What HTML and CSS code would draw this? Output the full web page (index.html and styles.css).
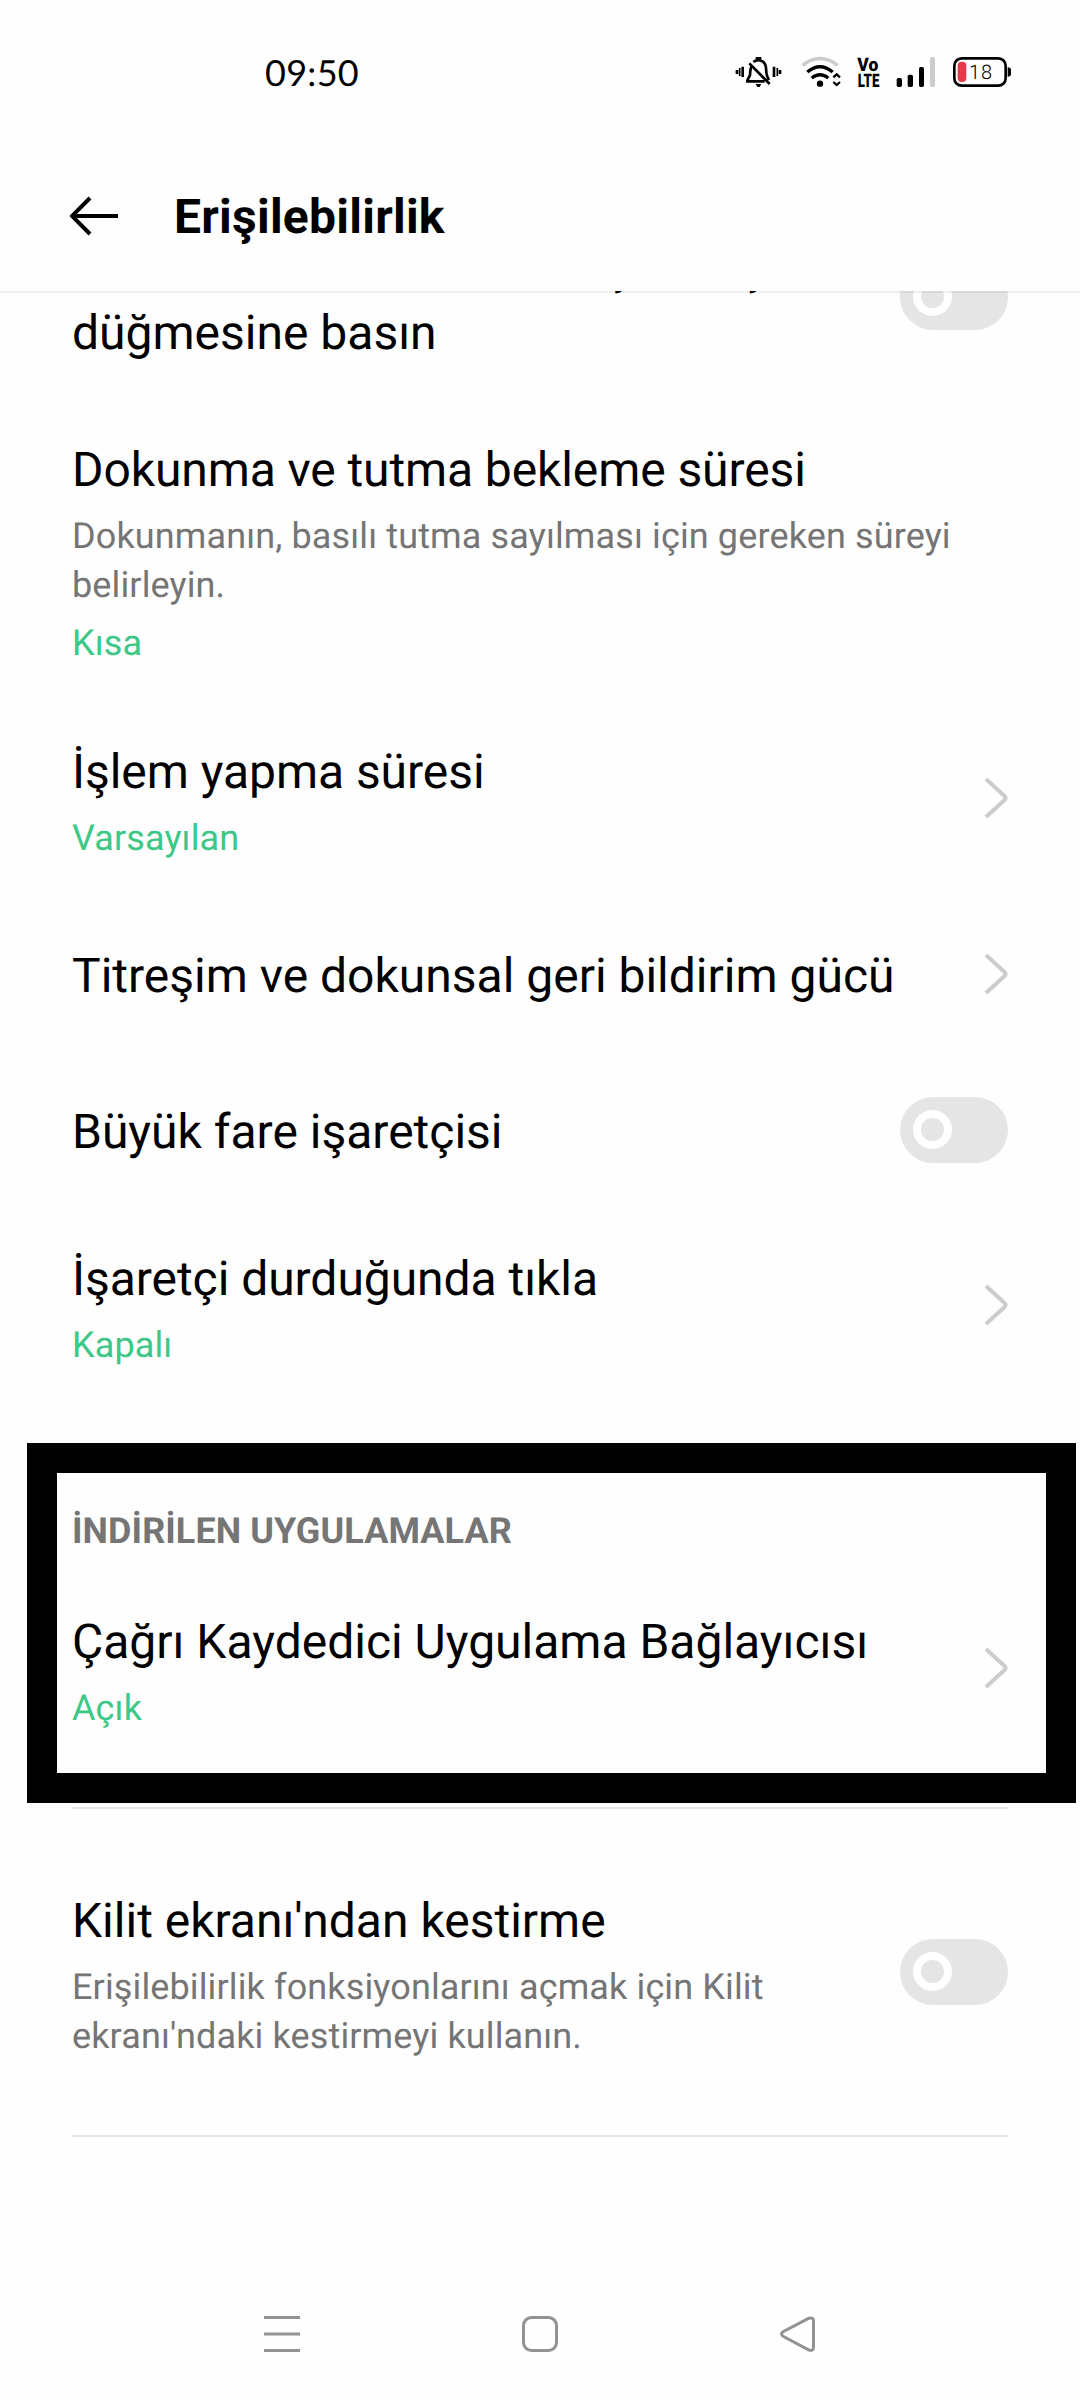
FILE: index.html
```html
<!DOCTYPE html>
<html lang="tr">
<head>
<meta charset="utf-8">
<title>Erişilebilirlik</title>
<link rel="stylesheet" href="styles.css">
</head>
<body>
<div class="screen">
  <header class="top">
    <div class="status">
      <time class="clock">09:50</time>
      <svg class="status-icons" viewBox="0 0 930 210" width="310" height="70">
        <g fill="none" stroke="#000" stroke-width="8">
          <path d="M51 90v12M68 80v31M162 80v31M180 90v12"/>
          <path d="M59 84v24M172 84v24" stroke-width="5"/>
          <path d="M95 78c-5 8-4 18-5 27l-8 16v3h52M100 66c13-10 32-6 37 12 3 12 0 22 5 32l5 10M88 70l61 62"/>
          <path d="M107 55h17"/>
        </g>
        <path d="M107 132h17l-5 9h-7z"/>
        <g fill="none" stroke-width="10">
          <path d="M248 76q52-41 105 0" stroke="#ccc"/>
          <path d="M262 96q38-31 76 0" stroke="#000"/>
          <path d="M275 114q25-20 50 0" stroke="#000"/>
          <path d="M340 112l10-9 10 9M340 126l10 9 10-9" stroke="#000" stroke-width="7"/>
        </g>
        <circle cx="300" cy="131" r="9.500"/>
        <g class="volte">
          <text x="412" y="94" textLength="63" lengthAdjust="spacingAndGlyphs">Vo</text>
          <text x="413" y="140" textLength="65" lengthAdjust="spacingAndGlyphs">LTE</text>
        </g>
        <rect x="530" y="114" width="16" height="27" rx="5"/>
        <rect x="563" y="104" width="16" height="37" rx="5"/>
        <rect x="597" y="81" width="15" height="60" rx="5"/>
        <rect x="630" y="51" width="15" height="90" rx="5" fill="#ccc"/>
        <rect x="703" y="55" width="154" height="82" rx="22" fill="none" stroke="#000" stroke-width="8"/>
        <path d="M863 82q10 0 10 8v12q0 8-10 8z"/>
        <rect x="713" y="65" width="26" height="61" rx="12" fill="#e6394b"/>
        <text class="level" x="747" y="116" textLength="69">18</text>
      </svg>
    </div>
    <div class="appbar">
      <svg class="back" viewBox="0 0 48 40" width="48" height="40"><path d="M48 20H2M20 2L2 20l18 18" fill="none" stroke="#000" stroke-width="4"/></svg>
      <h1 class="heading">Erişilebilirlik</h1>
    </div>
  </header>

  <main class="list">
    <div class="row row-power">
      <p class="title title-wrap">Aramaları sonlandırmak için Güç düğmesine basın</p>
      <span class="switch"></span>
    </div>
    <div class="row row-hold">
      <div class="text">
        <p class="title">Dokunma ve tutma bekleme süresi</p>
        <p class="note">Dokunmanın, basılı tutma sayılması için gereken süreyi belirleyin.</p>
        <p class="value value-after-note">Kısa</p>
      </div>
    </div>
    <div class="row row-action">
      <div class="text">
        <p class="title">İşlem yapma süresi</p>
        <p class="value">Varsayılan</p>
      </div>
      <svg class="chevron" viewBox="0 0 24 42" width="24" height="42"><path d="M2 2l18.500 17q2 2 0 4L2 40"/></svg>
    </div>
    <div class="row row-haptic">
      <p class="title">Titreşim ve dokunsal geri bildirim gücü</p>
      <svg class="chevron" viewBox="0 0 24 42" width="24" height="42"><path d="M2 2l18.500 17q2 2 0 4L2 40"/></svg>
    </div>
    <div class="row row-mouse">
      <p class="title">Büyük fare işaretçisi</p>
      <span class="switch"></span>
    </div>
    <div class="row row-click">
      <div class="text">
        <p class="title">İşaretçi durduğunda tıkla</p>
        <p class="value">Kapalı</p>
      </div>
      <svg class="chevron" viewBox="0 0 24 42" width="24" height="42"><path d="M2 2l18.500 17q2 2 0 4L2 40"/></svg>
    </div>
    <section class="downloads">
      <h2 class="section">İNDİRİLEN UYGULAMALAR</h2>
      <div class="row row-app">
        <div class="text">
          <p class="title">Çağrı Kaydedici Uygulama Bağlayıcısı</p>
          <p class="value">Açık</p>
        </div>
        <svg class="chevron" viewBox="0 0 24 42" width="24" height="42"><path d="M2 2l18.500 17q2 2 0 4L2 40"/></svg>
      </div>
      <div class="highlight"></div>
    </section>
    <div class="row row-lock">
      <div class="text">
        <p class="title">Kilit ekranı'ndan kestirme</p>
        <p class="note note-narrow">Erişilebilirlik fonksiyonlarını açmak için Kilit ekranı'ndaki kestirmeyi kullanın.</p>
      </div>
      <span class="switch"></span>
    </div>
  </main>

  <nav class="nav">
    <svg viewBox="0 0 36 36" width="36" height="36"><path d="M0 1.500h36M0 18h36M0 34.500h36"/></svg>
    <svg viewBox="0 0 36 36" width="36" height="36"><rect x="1.500" y="1.500" width="33" height="33" rx="8"/></svg>
    <svg viewBox="0 0 36 36" width="36" height="36"><path d="M29 2.200L3.500 15.500q-4 2.500 0 5L29 34q4.500 1.500 4.500-3V5q0-4-4.500-2.800z" stroke-width="2.600"/></svg>
  </nav>
</div>
</body>
</html>
```
FILE: styles.css
```css
*, *::before { box-sizing: border-box; }
body { margin: 0; background: #fefefe; }
h1, h2, p { margin: 0; font-weight: 400; }
svg { display: block; flex: none; }

.screen {
  width: 1080px;
  height: 2400px;
  display: flex;
  flex-direction: column;
  overflow: hidden;
  background: #fefefe;
  color: #000;
  font-family: Roboto, sans-serif;
  text-rendering: geometricPrecision;
}

/* Status bar and app bar */
.top {
  height: 291px;
  flex: none;
  position: relative;
  z-index: 1;
  background: #fefefe;
  box-shadow: 0 2px rgba(0, 0, 0, 0.06);
}
.status {
  height: 150px;
  padding: 40px 50px 0 265px;
  display: flex;
  justify-content: space-between;
}
.clock {
  font: 400 36px/64px Lato, sans-serif;
  letter-spacing: 0.3px;
}
.volte {
  font: 900 56px Roboto, sans-serif;
}
.level { font: 300 60px Roboto, sans-serif; }
.appbar {
  height: 134px;
  padding-left: 70px;
  display: flex;
  align-items: center;
  gap: 56px;
}
.back { margin-top: -2px; }
.heading {
  font-size: 48px;
  line-height: 56px;
  font-weight: 700;
  letter-spacing: 0.25px;
}

/* Settings list */
.list {
  height: 1969px;
  flex: none;
  overflow: hidden;
}
.row {
  margin: 0 72px;
  display: flex;
  justify-content: space-between;
  align-items: flex-start;
}
.title {
  font-size: 48px;
  line-height: 56px;
  white-space: nowrap;
}
.title-wrap {
  width: 780px;
  line-height: 66px;
  white-space: normal;
}
.note, .value {
  margin-top: 14px;
  font-size: 36px;
  line-height: 49px;
  letter-spacing: 0.13px;
  color: #757575;
}
.note-narrow { width: 720px; }
.value { color: #3dc888; }
.value-after-note { margin-top: 9px; }

.row-power { height: 194px; margin-top: -91px; padding-top: 34px; }
.row-hold { height: 314px; padding-top: 48px; }
.row-action { height: 180px; padding-top: 36px; }
.row-haptic { height: 172px; padding-top: 60px; }
.row-mouse { height: 140px; padding-top: 44px; }
.row-click { height: 210px; padding-top: 51px; }

.row-hold .title { letter-spacing: -0.1px; }
.row-action .title, .row-click .title { letter-spacing: -0.05px; }

.row-power .switch { margin-top: 30px; }
.row-action .chevron { margin-top: 33px; }
.row-haptic .chevron { margin-top: 5px; }
.row-mouse .switch { margin-top: -7px; }
.row-click .chevron { margin-top: 33px; }

.downloads { position: relative; height: 399px; }
.section {
  padding: 100px 72px 0;
  font-size: 36px;
  line-height: 42px;
  font-weight: 700;
  letter-spacing: 0.07px;
  color: #757575;
}
.row-app {
  height: 257px;
  padding-top: 62px;
  border-bottom: 2px solid #e5e5e5;
}
.row-app .chevron { margin-top: 33px; }
.highlight {
  position: absolute;
  left: 27px;
  top: 33px;
  width: 1049px;
  height: 360px;
  border: 30px solid #000;
}
.row-lock {
  height: 328px;
  padding-top: 84px;
  border-bottom: 2px solid #e5e5e5;
}
.row-lock .switch { margin-top: 46px; }

.switch {
  width: 108px;
  height: 66px;
  flex: none;
  padding: 13px;
  border-radius: 33px;
  background: #e5e5e5;
}
.switch::before {
  content: "";
  display: block;
  width: 39px;
  height: 39px;
  border: 8px solid #fff;
  border-radius: 50%;
}
.chevron path {
  fill: none;
  stroke: #ccc;
  stroke-width: 4;
}

/* System navigation */
.nav {
  flex: 1;
  padding: 56px 264px 0;
  display: flex;
  justify-content: space-between;
}
.nav path, .nav rect {
  fill: none;
  stroke: #929292;
  stroke-width: 3;
}
```
